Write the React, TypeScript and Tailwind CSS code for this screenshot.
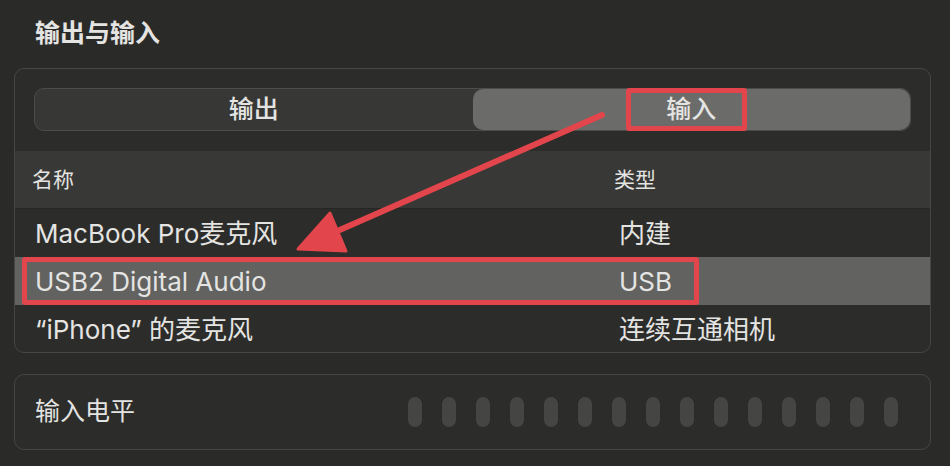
import React from "react";

const font = { fontFamily: 'Inter, "Noto Sans CJK SC", sans-serif' };

const rows = [
  { name: "MacBook Pro麦克风", type: "内建" },
  { name: "USB2 Digital Audio", type: "USB", selected: true },
  { name: "“iPhone” 的麦克风", type: "连续互通相机" },
];

// annotation arrow drawn over the list
function Arrow() {
  return (
    <svg className="absolute left-0 top-0 pointer-events-none" width="950" height="466">
      <line x1="602" y1="115" x2="326" y2="236" stroke="#e2454b" strokeWidth="6" strokeLinecap="round" />
      <polygon points="298,249 330,213 346,251" fill="#e2454b" stroke="#e2454b" strokeWidth="3" strokeLinejoin="round" />
    </svg>
  );
}

export default function App() {
  return (
    <div className="relative w-[950px] h-[466px] overflow-hidden bg-[#2a2a28] text-[#e4e4e2]" style={font}>
      <div className="h-[68px] pl-[35px] pt-[18px] text-[25px] font-semibold leading-[30px]">输出与输入</div>

      <div className="ml-[14px] w-[917px] h-[285px] rounded-[10px] border border-[#464644] bg-[#2c2c2a] overflow-hidden">
        <div className="px-[19px] pt-[19px]">
          <div className="grid grid-cols-2 h-[43px] rounded-[10px] border border-[#4c4c4a] bg-[#373735]">
            <div className="flex items-center justify-center text-[25px] font-medium">输出</div>
            <div className="relative flex items-center justify-center rounded-[10px] bg-[#6b6b69] text-[25px] font-medium">
              输入
              <div className="absolute left-[153px] top-[-1px] w-[121px] h-[43px] rounded-[3px] border-[5px] border-[#e2454b]" />
            </div>
          </div>
        </div>

        <div className="mt-[20px] grid grid-cols-[582px_1fr] h-[58px] items-center bg-[#383836] border-b border-[#262624] text-[21px]">
          <div className="pl-[17px]">名称</div>
          <div className="pl-[17px]">类型</div>
        </div>

        {rows.map((r) => (
          <div
            key={r.name}
            className={
              "relative grid grid-cols-[582px_1fr] h-[48px] items-center text-[26px] " +
              (r.selected ? "bg-[#626260]" : "")
            }
          >
            <div className="pl-[20px]">{r.name}</div>
            <div className="pl-[22px]">{r.type}</div>
            {r.selected && (
              <div className="absolute left-[7px] top-0 w-[677px] h-[48px] rounded-[3px] border-[5px] border-[#e2454b]" />
            )}
          </div>
        ))}
      </div>

      <div className="ml-[14px] w-[917px] mt-[21px] h-[76px] rounded-[10px] border border-[#464644] bg-[#2c2c2a] flex items-center pl-[20px] pr-[32px]">
        <div className="flex-1 text-[25px]">输入电平</div>
        <div className="flex gap-[20px]">
          {Array.from({ length: 15 }).map((_, i) => (
            <div key={i} className="w-[14px] h-[30px] rounded-full bg-[#454543]" />
          ))}
        </div>
      </div>

      <Arrow />
    </div>
  );
}
